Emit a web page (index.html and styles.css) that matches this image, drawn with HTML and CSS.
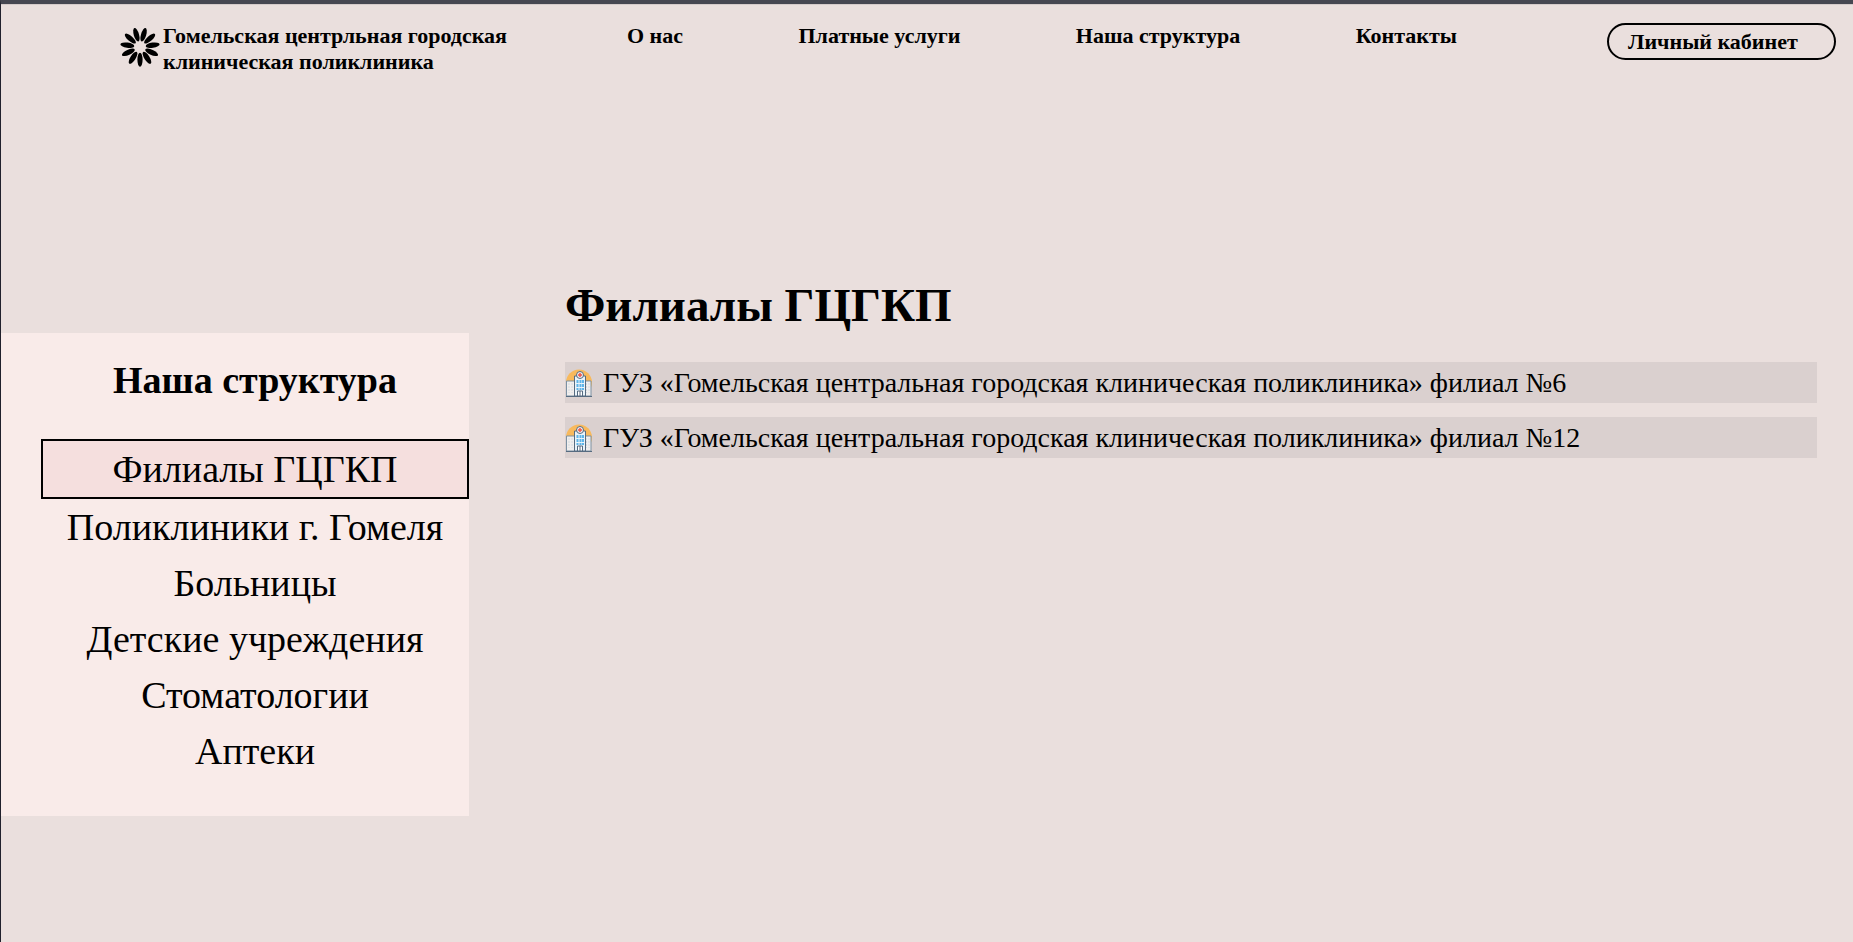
FILE: index.html
```html
<!DOCTYPE html>
<html lang="ru">
<head>
<meta charset="utf-8">
<title>Филиалы ГЦГКП</title>
<link rel="stylesheet" href="styles.css">
</head>
<body>
<svg class="sprite" aria-hidden="true">
  <symbol id="hospital" viewBox="0 0 28 28">
    <circle cx="14" cy="13.500" r="13" fill="#f8b95c"/>
    <path d="M1.500 12h8v15h-8zM19 12h7v15h-7z" fill="#f0eeed" stroke="#7d91a3"/>
    <path d="M4 14v10M7 14v10M21.500 14v10M24 14v10" stroke="#d5dbe0" stroke-dasharray="2 1"/>
    <path d="M9.500 27V7h11v20z" fill="#eaf4fa" stroke="#566b80"/>
    <path d="M12.500 11v10M15.500 11v10M18 11v10" stroke="#5eb5e8" stroke-width="2" stroke-dasharray="3 1"/>
    <circle cx="15" cy="6" r="3.500" fill="#f2eeee" stroke="#566b80"/>
    <path d="M15 4v4M13 6h4" stroke="#ee5548" stroke-width="1.500"/>
    <path d="M12.500 27v-5h5v5z" fill="#fff" stroke="#566b80"/>
    <path d="M15 22v5M1 27.500h26" stroke="#566b80"/>
  </symbol>
</svg>
<header class="header">
  <a class="brand" href="#">
    <svg class="brand-icon" viewBox="-20 -20 40 40" aria-hidden="true">
      <defs><ellipse id="petal" cy="12.800" rx="2.600" ry="7"/></defs>
      <use href="#petal"/>
      <use href="#petal" transform="rotate(32.727)"/>
      <use href="#petal" transform="rotate(65.455)"/>
      <use href="#petal" transform="rotate(98.182)"/>
      <use href="#petal" transform="rotate(130.909)"/>
      <use href="#petal" transform="rotate(163.636)"/>
      <use href="#petal" transform="rotate(196.364)"/>
      <use href="#petal" transform="rotate(229.091)"/>
      <use href="#petal" transform="rotate(261.818)"/>
      <use href="#petal" transform="rotate(294.545)"/>
      <use href="#petal" transform="rotate(327.273)"/>
    </svg>
    <span>Гомельская центрльная городская<br>клиническая поликлиника</span>
  </a>
  <nav class="nav">
    <a href="#">О нас</a>
    <a href="#">Платные услуги</a>
    <a href="#">Наша структура</a>
    <a href="#">Контакты</a>
  </nav>
  <button class="account" type="button">Личный кабинет</button>
</header>
<div class="page">
  <aside class="sidebar">
    <h2 class="sidebar-title">Наша структура</h2>
    <ul class="menu">
      <li><a class="menu-link active" href="#">Филиалы ГЦГКП</a></li>
      <li><a class="menu-link" href="#">Поликлиники г. Гомеля</a></li>
      <li><a class="menu-link" href="#">Больницы</a></li>
      <li><a class="menu-link" href="#">Детские учреждения</a></li>
      <li><a class="menu-link" href="#">Стоматологии</a></li>
      <li><a class="menu-link" href="#">Аптеки</a></li>
    </ul>
  </aside>
  <main class="content">
    <h1 class="title">Филиалы ГЦГКП</h1>
    <ul class="branches">
      <li class="branch"><svg class="branch-icon" aria-hidden="true"><use href="#hospital"/></svg><span>ГУЗ «Гомельская центральная городская клиническая поликлиника» филиал №6</span></li>
      <li class="branch"><svg class="branch-icon" aria-hidden="true"><use href="#hospital"/></svg><span>ГУЗ «Гомельская центральная городская клиническая поликлиника» филиал №12</span></li>
    </ul>
  </main>
</div>
</body>
</html>
```
FILE: styles.css
```css
* {
  box-sizing: border-box;
}

body {
  margin: 0;
  min-height: 100vh;
  border-top: 4px solid #464751;
  border-left: 1px solid #20202c;
  background: #eadfdd;
  color: #000;
  font-family: "Liberation Serif", "Times New Roman", serif;
}

a {
  color: inherit;
  text-decoration: none;
}

ul {
  margin: 0;
  padding: 0;
  list-style: none;
}

.sprite {
  display: none;
}

.header {
  display: flex;
  align-items: flex-start;
  padding: 18px 17px 0 119px;
  border-top: 1px solid #d5cbca;
  font-size: 22px;
  font-weight: 700;
  line-height: 26px;
}

.brand {
  display: flex;
  gap: 3px;
}

.brand-icon {
  width: 40px;
  height: 40px;
  margin-top: 4px;
}

.nav {
  flex: 1;
  display: flex;
  justify-content: space-between;
  padding: 0 150px 0 120px;
}

.account {
  width: 229px;
  height: 37px;
  padding: 0 19px;
  border: 2px solid #000;
  border-radius: 19px;
  background: transparent;
  color: inherit;
  font: inherit;
  text-align: left;
}

.page {
  display: flex;
  align-items: flex-start;
  padding: 202px 36px 40px 0;
}

.sidebar {
  flex: none;
  width: 468px;
  margin-top: 56px;
  padding: 24px 0 37px 40px;
  background: #f9ebe9;
  text-align: center;
}

.sidebar-title {
  margin: 0 0 36px;
  font-size: 38px;
  line-height: 46px;
}

.menu-link {
  display: block;
  font-size: 38px;
  line-height: 56px;
}

.menu-link.active {
  border: 2px solid #000;
  background: #f5dfde;
}

.content {
  flex: 1;
  margin-left: 96px;
}

.title {
  margin: 0 0 29px;
  font-size: 47px;
  line-height: 56px;
}

.branches {
  display: grid;
  gap: 14px;
}

.branch {
  display: flex;
  align-items: center;
  gap: 10px;
  background: #dad0cf;
  font-size: 28px;
  line-height: 41px;
}

.branch-icon {
  width: 28px;
  height: 28px;
}
```
